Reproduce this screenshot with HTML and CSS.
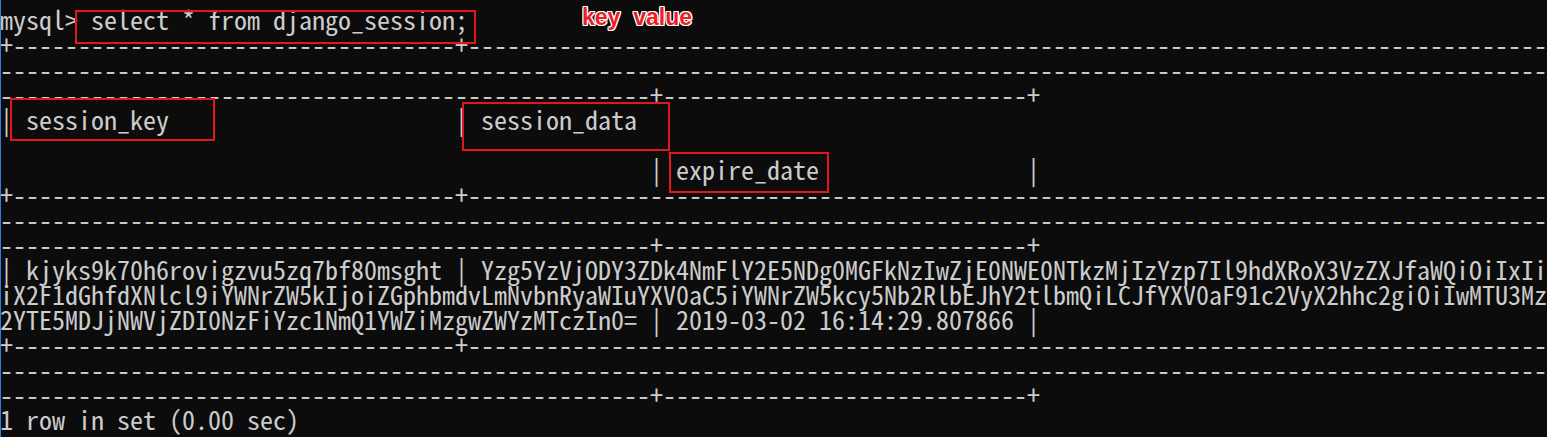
FILE: index.html
```html
<!DOCTYPE html>
<html lang="en">
<head>
<meta charset="utf-8">
<title>mysql - django_session</title>
<link rel="stylesheet" href="styles.css">
</head>
<body>
<main class="console">
  <div class="screen">
    <div class="line">mysql&gt; select * from django_session;</div>
    <div class="line">+----------------------------------+------------------------------------------------------------------------------------------</div>
    <div class="line">-----------------------------------------------------------------------------------------------------------------------------</div>
    <div class="line">--------------------------------------------------+----------------------------+</div>
    <div class="line">| session_key                      | session_data</div>
    <div class="line"> </div>
    <div class="line">                                                  | expire_date                |</div>
    <div class="line">+----------------------------------+------------------------------------------------------------------------------------------</div>
    <div class="line">-----------------------------------------------------------------------------------------------------------------------------</div>
    <div class="line">--------------------------------------------------+----------------------------+</div>
    <div class="line">| kjyks9k70h6rovigzvu5zq7bf80msght | Yzg5YzVjODY3ZDk4NmFlY2E5NDg0MGFkNzIwZjE0NWE0NTkzMjIzYzp7Il9hdXRoX3VzZXJfaWQiOiIxIiw</div>
    <div class="line">iX2F1dGhfdXNlcl9iYWNrZW5kIjoiZGphbmdvLmNvbnRyaWIuYXV0aC5iYWNrZW5kcy5Nb2RlbEJhY2tlbmQiLCJfYXV0aF91c2VyX2hhc2giOiIwMTU3MzY</div>
    <div class="line">2YTE5MDJjNWVjZDI0NzFiYzc1NmQ1YWZiMzgwZWYzMTczIn0= | 2019-03-02 16:14:29.807866 |</div>
    <div class="line">+----------------------------------+------------------------------------------------------------------------------------------</div>
    <div class="line">-----------------------------------------------------------------------------------------------------------------------------</div>
    <div class="line">--------------------------------------------------+----------------------------+</div>
    <div class="line">1 row in set (0.00 sec)</div>
  </div>
  <div class="mark mark-cmd"></div>
  <div class="mark mark-key"></div>
  <div class="mark mark-data"></div>
  <div class="mark mark-date"></div>
  <div class="note">key&nbsp; value</div>
</main>
</body>
</html>
```

FILE: styles.css
```css
html, body {
  margin: 0;
  padding: 0;
}

body {
  width: 1547px;
  height: 437px;
  overflow: hidden;
  background: #0c0c0c;
}

.console {
  position: relative;
  width: 1547px;
  height: 437px;
  overflow: hidden;
  background: #0c0c0c;
}

.console::before {
  content: "";
  position: absolute;
  left: 0;
  top: 0;
  bottom: 0;
  width: 1px;
  background: #2f7fd4;
  z-index: 1;
}

.screen {
  padding-top: 6px;
  font-family: "Noto Sans Mono CJK SC", "Noto Sans Mono CJK JP", "Liberation Mono", monospace;
  font-size: 26px;
  color: #cccccc;
}

.line {
  height: 25px;
  line-height: 25px;
  white-space: pre;
}

.mark {
  position: absolute;
  box-sizing: border-box;
  border: 2px solid #e5151e;
}

.mark-cmd {
  left: 75px;
  top: 10px;
  width: 401px;
  height: 34px;
}

.mark-key {
  left: 10px;
  top: 98px;
  width: 205px;
  height: 43px;
}

.mark-data {
  left: 462px;
  top: 102px;
  width: 208px;
  height: 49px;
}

.mark-date {
  left: 669px;
  top: 152px;
  width: 160px;
  height: 41px;
}

.note {
  position: absolute;
  left: 582px;
  top: 3px;
  font-family: "Liberation Sans", Arial, sans-serif;
  font-weight: bold;
  font-size: 23px;
  line-height: 28px;
  color: #f21c26;
  white-space: pre;
  text-shadow: 1px 0 #ffffff, -1px 0 #ffffff, 0 1px #ffffff, 0 -1px #ffffff,
    1px 1px #ffffff, -1px -1px #ffffff, 1px -1px #ffffff, -1px 1px #ffffff;
}
```
